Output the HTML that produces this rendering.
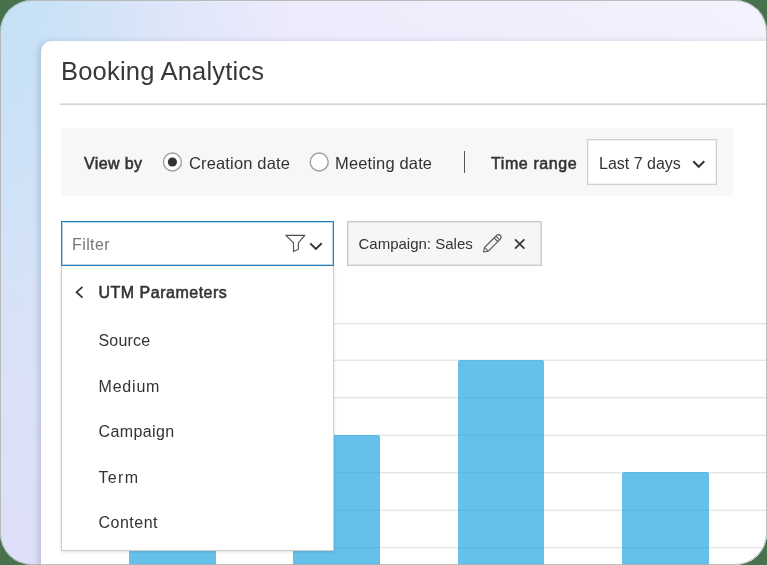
<!DOCTYPE html>
<html><head><meta charset="utf-8">
<style>
html,body{margin:0;padding:0;width:767px;height:565px;overflow:hidden;background:#47724d;}
*{box-sizing:border-box;}
body{font-family:"Liberation Sans",sans-serif;color:#333;}
#clip{will-change:transform;position:absolute;left:0;top:0;width:767px;height:565px;border-radius:32px;overflow:hidden;
 background:radial-gradient(ellipse 300px 620px at 0 0,rgba(196,225,245,1) 0%,rgba(196,225,245,0.75) 25%,rgba(196,225,245,0.3) 60%,rgba(196,225,245,0) 100%),linear-gradient(to top right,#e0dff9 0%,#e9e6fb 45%,#f4f2fd 100%);}
#border{position:absolute;left:0;top:0;width:767px;height:565px;border:1.5px solid rgba(175,175,172,0.8);border-radius:32px;}
#card{position:absolute;left:41px;top:41px;width:760px;height:560px;background:#fff;border-radius:10px;
 box-shadow:-2px 1px 6px rgba(60,80,120,0.26);}
.a{position:absolute;white-space:nowrap;}
.t16{font-size:16px;line-height:20px;}
.b{font-weight:normal;-webkit-text-stroke:0.55px #333;}
.grid{position:absolute;left:61px;width:710px;height:2px;}
.gd{background:linear-gradient(rgba(0,0,0,0.1) 50%,rgba(0,0,0,0.035) 50%);}
.gu{background:linear-gradient(rgba(0,0,0,0.035) 50%,rgba(0,0,0,0.1) 50%);}
.bar{position:absolute;width:86.5px;height:300px;background:rgba(26,163,224,0.67);border-radius:2px 2px 0 0;}
</style></head><body>
<div id="clip">
<div id="card"></div>

<!-- title -->
<div class="a" style="left:61px;top:56px;font-size:25.5px;line-height:30px;letter-spacing:0.2px;color:#383838;">Booking Analytics</div>
<div class="a" style="left:60px;top:103px;width:720px;height:2px;background:linear-gradient(#e3e3e3 50%,#d3d3d3 50%);"></div>

<!-- view by bar -->
<div class="a" style="left:61px;top:128px;width:672px;height:68px;background:#f7f7f7;border-radius:4px;"></div>
<div class="a t16 b" style="left:84px;top:154px;letter-spacing:0.37px;">View by</div>
<svg class="a" style="left:160px;top:150px;" width="26" height="24" viewBox="0 0 26 24"><circle cx="12.4" cy="12" r="9" fill="#fff" stroke="#a0a0a0" stroke-width="1.4"/><circle cx="12.4" cy="12" r="4.6" fill="#333"/></svg>

<div class="a t16" style="left:189px;top:153px;font-size:16.5px;letter-spacing:0.15px;">Creation date</div>
<svg class="a" style="left:307px;top:150px;" width="26" height="24" viewBox="0 0 26 24"><circle cx="12.2" cy="12" r="9" fill="#fff" stroke="#a0a0a0" stroke-width="1.4"/></svg>
<div class="a t16" style="left:335px;top:153px;font-size:16.5px;letter-spacing:0.15px;">Meeting date</div>
<div class="a" style="left:463.5px;top:151px;width:1.5px;height:22px;background:#555;"></div>
<div class="a t16 b" style="left:491px;top:154px;letter-spacing:0.6px;">Time range</div>
<div class="a" style="left:587px;top:139px;width:130px;height:46px;background:#fff;border:1px solid #d0d0d0;box-shadow:inset 0 0 0 1px rgba(0,0,0,0.06);"></div>
<div class="a t16" style="left:599px;top:154px;">Last 7 days</div>
<svg class="a" style="left:690px;top:156px;" width="18" height="14" viewBox="0 0 18 14"><path d="M3.3 5.3 L8.7 10.8 L14.3 5.3" fill="none" stroke="#333" stroke-width="2"/></svg>

<!-- chart -->
<div class="grid gd" style="top:323px;"></div>
<div class="grid gu" style="top:359px;"></div>
<div class="grid gd" style="top:397px;"></div>
<div class="grid gu" style="top:434px;"></div>
<div class="grid gd" style="top:472px;"></div>
<div class="grid gu" style="top:509px;"></div>
<div class="grid gd" style="top:547px;"></div>
<div class="bar" style="left:129.2px;top:500px;"></div>
<div class="bar" style="left:293.3px;top:435px;"></div>
<div class="bar" style="left:457.5px;top:360px;"></div>
<div class="bar" style="left:622px;top:472px;"></div>

<!-- filter input -->
<div class="a" style="left:61px;top:221px;width:272.5px;height:45px;background:#fff;border:1px solid #2680bc;box-shadow:inset 0 0 0 1px rgba(38,128,188,0.32);"></div>
<div class="a t16" style="left:72px;top:235px;color:#777;letter-spacing:0.4px;">Filter</div>
<svg class="a" style="left:280px;top:230px;" width="46" height="26" viewBox="0 0 46 26">
 <path d="M5.9 5.4 H24.8 L18.4 12.9 V19.2 L13.5 21.6 V12.9 Z" fill="none" stroke="#505050" stroke-width="1.15" stroke-linejoin="round"/>
 <path d="M30.2 13.3 L35.9 19 L41.7 13.3" fill="none" stroke="#333" stroke-width="1.9"/>
</svg>

<!-- chip -->
<div class="a" style="left:347px;top:221px;width:195px;height:45px;background:#f6f6f6;border:1px solid #cbcbcb;box-shadow:inset 0 0 0 1px rgba(0,0,0,0.08);"></div>
<div class="a" style="left:358.5px;top:234px;font-size:15px;line-height:20px;">Campaign: Sales</div>
<svg class="a" style="left:480px;top:231px;" width="50" height="25" viewBox="0 0 50 25">
 <path d="M3.5 21 L4.5 16.5 L16.5 4.5 Q18.5 2.8 20.3 4.5 Q22 6.3 20.3 8.2 L8.3 20.2 Z M14.6 7.4 L17.7 10.5 M16.4 5.6 L19.5 8.7 M5.2 17 L7.8 19.8" fill="none" stroke="#555" stroke-width="1.1" stroke-linejoin="round"/>
 <path d="M35 8.3 L44.4 17.6 M44.4 8.3 L35 17.6" fill="none" stroke="#363636" stroke-width="1.75"/>
</svg>

<!-- dropdown -->
<div class="a" style="left:60.5px;top:266px;width:273px;height:285px;background:#fff;border:1.5px solid #cdcdcd;border-top:none;box-shadow:0 1px 3px rgba(0,0,0,0.12);"></div>
<svg class="a" style="left:72px;top:284px;" width="14" height="16" viewBox="0 0 14 16"><path d="M10.5 2.8 L4.6 8.2 L10.5 13.6" fill="none" stroke="#333" stroke-width="1.8"/></svg>
<div class="a t16 b" style="left:98.5px;top:283px;letter-spacing:0.5px;">UTM Parameters</div>
<div class="a t16" style="left:98.5px;top:331px;letter-spacing:0.2px;">Source</div>
<div class="a t16" style="left:98.5px;top:376.5px;letter-spacing:0.8px;">Medium</div>
<div class="a t16" style="left:98.5px;top:422px;letter-spacing:0.38px;">Campaign</div>
<div class="a t16" style="left:98.5px;top:467.5px;letter-spacing:1.3px;">Term</div>
<div class="a t16" style="left:98.5px;top:513px;letter-spacing:0.5px;">Content</div>
</div>
<div id="border"></div>
</body></html>
